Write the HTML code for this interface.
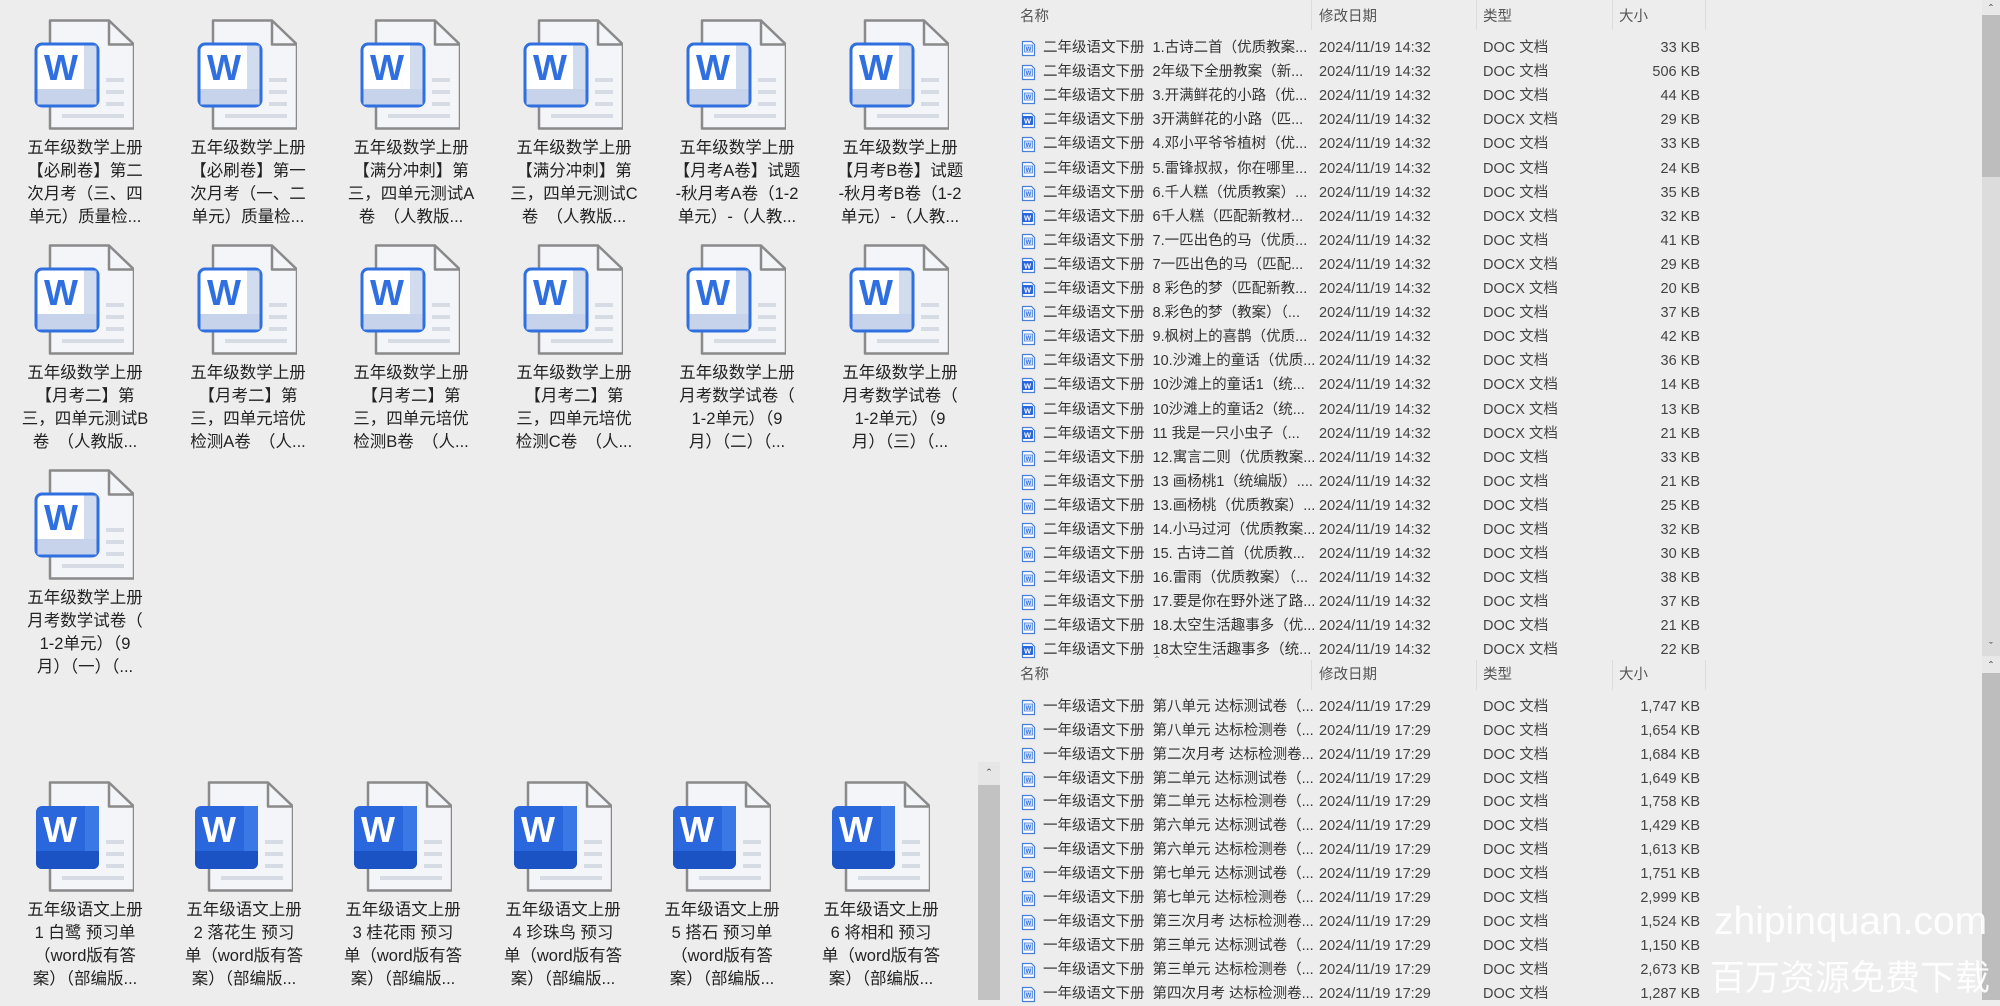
<!DOCTYPE html>
<html><head><meta charset="utf-8">
<style>
*{margin:0;padding:0;box-sizing:border-box}
html,body{width:2000px;height:1000px;overflow:hidden;background:#ededed;font-family:"Liberation Sans","Noto Sans CJK SC",sans-serif}
.ic{position:absolute;width:100px;height:112px}
.lb{position:absolute;width:130px;text-align:center;font-size:16.5px;line-height:23px;color:#222;white-space:nowrap}
.row{position:absolute;left:1020px;height:24px;width:700px;font-size:14.5px;line-height:24px;color:#333;white-space:nowrap}
.row svg{position:absolute;left:1px;top:4px;width:15px;height:17px}
.row .n{position:absolute;left:23px}
.row .d{position:absolute;left:299px;color:#444}
.row .t{position:absolute;left:463px;color:#444}
.row .s{position:absolute;right:20px;width:120px;text-align:right;color:#444}
.hd{position:absolute;left:1000px;width:705px;height:30px;font-size:14.5px;color:#555}
.hd span{position:absolute;top:5px}
.hd i{position:absolute;top:0;width:1px;height:30px;background:#dcdcdc}
.wm{position:absolute;color:rgba(255,255,255,.9);white-space:nowrap}
</style></head><body>
<svg width="0" height="0" style="position:absolute">
<defs>
<g id="wl">
<path d="M16 1.5h59l25 24v84H16z" fill="#f4f5f8" stroke="#8a8a8a" stroke-width="2.5" stroke-linejoin="round"/>
<path d="M75 1.5v24h25" fill="none" stroke="#8a8a8a" stroke-width="2.5" stroke-linejoin="round"/>
<rect x="72" y="59" width="18" height="4" fill="#d6dbe4"/><rect x="72" y="71" width="18" height="4" fill="#d6dbe4"/><rect x="72" y="83" width="18" height="4" fill="#d6dbe4"/><rect x="28" y="95" width="62" height="4" fill="#d6dbe4"/>
<rect x="2" y="25" width="62" height="62" rx="6" fill="#fff" stroke="#2f6fe0" stroke-width="3"/>
<rect x="3.5" y="70" width="59" height="15.5" fill="#c6d3ea"/>
<rect x="50" y="26.5" width="12.5" height="59" fill="#c6d3ea" opacity=".8"/>
<text x="27" y="61" text-anchor="middle" font-family="Liberation Sans,sans-serif" font-weight="bold" font-size="36" fill="#2f6fe0">W</text>
</g>
<g id="ws">
<path d="M16 1.5h59l25 24v84H16z" fill="#f4f5f8" stroke="#8a8a8a" stroke-width="2.5" stroke-linejoin="round"/>
<path d="M75 1.5v24h25" fill="none" stroke="#8a8a8a" stroke-width="2.5" stroke-linejoin="round"/>
<rect x="72" y="59" width="18" height="4" fill="#d6dbe4"/><rect x="72" y="71" width="18" height="4" fill="#d6dbe4"/><rect x="72" y="83" width="18" height="4" fill="#d6dbe4"/><rect x="28" y="95" width="62" height="4" fill="#d6dbe4"/>
<rect x="2" y="25" width="63" height="63" rx="6" fill="#2b67dc"/>
<path d="M2 70h63v12a6 6 0 0 1-6 6H8a6 6 0 0 1-6-6z" fill="#1b52c4"/>
<rect x="51" y="25" width="14" height="45" fill="#3a78e6"/>
<text x="26" y="61" text-anchor="middle" font-family="Liberation Sans,sans-serif" font-weight="bold" font-size="36" fill="#fff">W</text>
</g>
<g id="sd"><path d="M1.5 1.5h9l3 3v11h-12z" fill="#fff" stroke="#4a7fd8" stroke-width="1.2"/><rect x="3.5" y="5" width="8" height="7" fill="#dfe8f7" stroke="#4a7fd8" stroke-width=".8"/><text x="7.5" y="11" text-anchor="middle" font-size="6" font-weight="bold" fill="#2f6fe0" font-family="Liberation Sans,sans-serif">W</text></g>
<g id="sx"><path d="M1.5 1.5h9l3 3v11h-12z" fill="#fff" stroke="#4a7fd8" stroke-width="1.2"/><rect x="1" y="4" width="11" height="9" rx="1" fill="#2b67dc"/><text x="6.5" y="11.5" text-anchor="middle" font-size="7.5" font-weight="bold" fill="#fff" font-family="Liberation Sans,sans-serif">W</text></g>
</defs></svg>

<svg class="ic" style="left:34px;top:19px" viewBox="0 0 100 112"><use href="#wl"/></svg>
<svg class="ic" style="left:197px;top:19px" viewBox="0 0 100 112"><use href="#wl"/></svg>
<svg class="ic" style="left:360px;top:19px" viewBox="0 0 100 112"><use href="#wl"/></svg>
<svg class="ic" style="left:523px;top:19px" viewBox="0 0 100 112"><use href="#wl"/></svg>
<svg class="ic" style="left:686px;top:19px" viewBox="0 0 100 112"><use href="#wl"/></svg>
<svg class="ic" style="left:849px;top:19px" viewBox="0 0 100 112"><use href="#wl"/></svg>
<svg class="ic" style="left:34px;top:244px" viewBox="0 0 100 112"><use href="#wl"/></svg>
<svg class="ic" style="left:197px;top:244px" viewBox="0 0 100 112"><use href="#wl"/></svg>
<svg class="ic" style="left:360px;top:244px" viewBox="0 0 100 112"><use href="#wl"/></svg>
<svg class="ic" style="left:523px;top:244px" viewBox="0 0 100 112"><use href="#wl"/></svg>
<svg class="ic" style="left:686px;top:244px" viewBox="0 0 100 112"><use href="#wl"/></svg>
<svg class="ic" style="left:849px;top:244px" viewBox="0 0 100 112"><use href="#wl"/></svg>
<svg class="ic" style="left:34px;top:469px" viewBox="0 0 100 112"><use href="#wl"/></svg>

<div class="lb" style="left:20px;top:137px">五年级数学上册<br>【必刷卷】第二<br>次月考（三、四<br>单元）质量检...</div>
<div class="lb" style="left:183px;top:137px">五年级数学上册<br>【必刷卷】第一<br>次月考（一、二<br>单元）质量检...</div>
<div class="lb" style="left:346px;top:137px">五年级数学上册<br>【满分冲刺】第<br>三，四单元测试A<br>卷　（人教版...</div>
<div class="lb" style="left:509px;top:137px">五年级数学上册<br>【满分冲刺】第<br>三，四单元测试C<br>卷　（人教版...</div>
<div class="lb" style="left:672px;top:137px">五年级数学上册<br>【月考A卷】试题<br>-秋月考A卷（1-2<br>单元）-（人教...</div>
<div class="lb" style="left:835px;top:137px">五年级数学上册<br>【月考B卷】试题<br>-秋月考B卷（1-2<br>单元）-（人教...</div>
<div class="lb" style="left:20px;top:362px">五年级数学上册<br>【月考二】第<br>三，四单元测试B<br>卷　（人教版...</div>
<div class="lb" style="left:183px;top:362px">五年级数学上册<br>【月考二】第<br>三，四单元培优<br>检测A卷　（人...</div>
<div class="lb" style="left:346px;top:362px">五年级数学上册<br>【月考二】第<br>三，四单元培优<br>检测B卷　（人...</div>
<div class="lb" style="left:509px;top:362px">五年级数学上册<br>【月考二】第<br>三，四单元培优<br>检测C卷　（人...</div>
<div class="lb" style="left:672px;top:362px">五年级数学上册<br>月考数学试卷（<br>1-2单元）（9<br>月）（二）（...</div>
<div class="lb" style="left:835px;top:362px">五年级数学上册<br>月考数学试卷（<br>1-2单元）（9<br>月）（三）（...</div>
<div class="lb" style="left:20px;top:587px">五年级数学上册<br>月考数学试卷（<br>1-2单元）（9<br>月）（一）（...</div>

<svg class="ic" style="left:34px;top:781px" viewBox="0 0 100 112"><use href="#ws"/></svg>
<svg class="ic" style="left:193px;top:781px" viewBox="0 0 100 112"><use href="#ws"/></svg>
<svg class="ic" style="left:352px;top:781px" viewBox="0 0 100 112"><use href="#ws"/></svg>
<svg class="ic" style="left:512px;top:781px" viewBox="0 0 100 112"><use href="#ws"/></svg>
<svg class="ic" style="left:671px;top:781px" viewBox="0 0 100 112"><use href="#ws"/></svg>
<svg class="ic" style="left:830px;top:781px" viewBox="0 0 100 112"><use href="#ws"/></svg>
<div class="lb" style="left:20px;top:899px">五年级语文上册<br>1 白鹭 预习单<br>（word版有答<br>案）（部编版...</div>
<div class="lb" style="left:179px;top:899px">五年级语文上册<br>2 落花生 预习<br>单（word版有答<br>案）（部编版...</div>
<div class="lb" style="left:338px;top:899px">五年级语文上册<br>3 桂花雨 预习<br>单（word版有答<br>案）（部编版...</div>
<div class="lb" style="left:498px;top:899px">五年级语文上册<br>4 珍珠鸟 预习<br>单（word版有答<br>案）（部编版...</div>
<div class="lb" style="left:657px;top:899px">五年级语文上册<br>5 搭石 预习单<br>（word版有答<br>案）（部编版...</div>
<div class="lb" style="left:816px;top:899px">五年级语文上册<br>6 将相和 预习<br>单（word版有答<br>案）（部编版...</div>

<div style="position:absolute;left:978px;top:762px;width:22px;height:23px;background:#e6e6e6;color:#444;font-size:13px;text-align:center;line-height:23px">&#710;</div>
<div style="position:absolute;left:978px;top:785px;width:22px;height:215px;background:#c2c2c2"></div>

<div class="hd" style="top:0"><span style="left:20px">名称</span><span style="left:155px;top:-4px;font-size:12px;color:#777">&#710;</span><i style="left:311px"></i><span style="left:319px">修改日期</span><i style="left:476px"></i><span style="left:483px">类型</span><i style="left:612px"></i><span style="left:619px">大小</span><i style="left:705px"></i></div>

<div class="row" style="top:36px"><svg viewBox="0 0 15 17"><use href="#sd"/></svg><span class="n">二年级语文下册&nbsp; 1.古诗二首（优质教案...</span><span class="d">2024/11/19 14:32</span><span class="t">DOC 文档</span><span class="s">33 KB</span></div>
<div class="row" style="top:60px"><svg viewBox="0 0 15 17"><use href="#sd"/></svg><span class="n">二年级语文下册&nbsp; 2年级下全册教案（新...</span><span class="d">2024/11/19 14:32</span><span class="t">DOC 文档</span><span class="s">506 KB</span></div>
<div class="row" style="top:84px"><svg viewBox="0 0 15 17"><use href="#sd"/></svg><span class="n">二年级语文下册&nbsp; 3.开满鲜花的小路（优...</span><span class="d">2024/11/19 14:32</span><span class="t">DOC 文档</span><span class="s">44 KB</span></div>
<div class="row" style="top:108px"><svg viewBox="0 0 15 17"><use href="#sx"/></svg><span class="n">二年级语文下册&nbsp; 3开满鲜花的小路（匹...</span><span class="d">2024/11/19 14:32</span><span class="t">DOCX 文档</span><span class="s">29 KB</span></div>
<div class="row" style="top:132px"><svg viewBox="0 0 15 17"><use href="#sd"/></svg><span class="n">二年级语文下册&nbsp; 4.邓小平爷爷植树（优...</span><span class="d">2024/11/19 14:32</span><span class="t">DOC 文档</span><span class="s">33 KB</span></div>
<div class="row" style="top:157px"><svg viewBox="0 0 15 17"><use href="#sd"/></svg><span class="n">二年级语文下册&nbsp; 5.雷锋叔叔，你在哪里...</span><span class="d">2024/11/19 14:32</span><span class="t">DOC 文档</span><span class="s">24 KB</span></div>
<div class="row" style="top:181px"><svg viewBox="0 0 15 17"><use href="#sd"/></svg><span class="n">二年级语文下册&nbsp; 6.千人糕（优质教案）...</span><span class="d">2024/11/19 14:32</span><span class="t">DOC 文档</span><span class="s">35 KB</span></div>
<div class="row" style="top:205px"><svg viewBox="0 0 15 17"><use href="#sx"/></svg><span class="n">二年级语文下册&nbsp; 6千人糕（匹配新教材...</span><span class="d">2024/11/19 14:32</span><span class="t">DOCX 文档</span><span class="s">32 KB</span></div>
<div class="row" style="top:229px"><svg viewBox="0 0 15 17"><use href="#sd"/></svg><span class="n">二年级语文下册&nbsp; 7.一匹出色的马（优质...</span><span class="d">2024/11/19 14:32</span><span class="t">DOC 文档</span><span class="s">41 KB</span></div>
<div class="row" style="top:253px"><svg viewBox="0 0 15 17"><use href="#sx"/></svg><span class="n">二年级语文下册&nbsp; 7一匹出色的马（匹配...</span><span class="d">2024/11/19 14:32</span><span class="t">DOCX 文档</span><span class="s">29 KB</span></div>
<div class="row" style="top:277px"><svg viewBox="0 0 15 17"><use href="#sx"/></svg><span class="n">二年级语文下册&nbsp; 8 彩色的梦（匹配新教...</span><span class="d">2024/11/19 14:32</span><span class="t">DOCX 文档</span><span class="s">20 KB</span></div>
<div class="row" style="top:301px"><svg viewBox="0 0 15 17"><use href="#sd"/></svg><span class="n">二年级语文下册&nbsp; 8.彩色的梦（教案）（...</span><span class="d">2024/11/19 14:32</span><span class="t">DOC 文档</span><span class="s">37 KB</span></div>
<div class="row" style="top:325px"><svg viewBox="0 0 15 17"><use href="#sd"/></svg><span class="n">二年级语文下册&nbsp; 9.枫树上的喜鹊（优质...</span><span class="d">2024/11/19 14:32</span><span class="t">DOC 文档</span><span class="s">42 KB</span></div>
<div class="row" style="top:349px"><svg viewBox="0 0 15 17"><use href="#sd"/></svg><span class="n">二年级语文下册&nbsp; 10.沙滩上的童话（优质...</span><span class="d">2024/11/19 14:32</span><span class="t">DOC 文档</span><span class="s">36 KB</span></div>
<div class="row" style="top:373px"><svg viewBox="0 0 15 17"><use href="#sx"/></svg><span class="n">二年级语文下册&nbsp; 10沙滩上的童话1（统...</span><span class="d">2024/11/19 14:32</span><span class="t">DOCX 文档</span><span class="s">14 KB</span></div>
<div class="row" style="top:398px"><svg viewBox="0 0 15 17"><use href="#sx"/></svg><span class="n">二年级语文下册&nbsp; 10沙滩上的童话2（统...</span><span class="d">2024/11/19 14:32</span><span class="t">DOCX 文档</span><span class="s">13 KB</span></div>
<div class="row" style="top:422px"><svg viewBox="0 0 15 17"><use href="#sx"/></svg><span class="n">二年级语文下册&nbsp; 11 我是一只小虫子（...</span><span class="d">2024/11/19 14:32</span><span class="t">DOCX 文档</span><span class="s">21 KB</span></div>
<div class="row" style="top:446px"><svg viewBox="0 0 15 17"><use href="#sd"/></svg><span class="n">二年级语文下册&nbsp; 12.寓言二则（优质教案...</span><span class="d">2024/11/19 14:32</span><span class="t">DOC 文档</span><span class="s">33 KB</span></div>
<div class="row" style="top:470px"><svg viewBox="0 0 15 17"><use href="#sd"/></svg><span class="n">二年级语文下册&nbsp; 13 画杨桃1（统编版）....</span><span class="d">2024/11/19 14:32</span><span class="t">DOC 文档</span><span class="s">21 KB</span></div>
<div class="row" style="top:494px"><svg viewBox="0 0 15 17"><use href="#sd"/></svg><span class="n">二年级语文下册&nbsp; 13.画杨桃（优质教案）...</span><span class="d">2024/11/19 14:32</span><span class="t">DOC 文档</span><span class="s">25 KB</span></div>
<div class="row" style="top:518px"><svg viewBox="0 0 15 17"><use href="#sd"/></svg><span class="n">二年级语文下册&nbsp; 14.小马过河（优质教案...</span><span class="d">2024/11/19 14:32</span><span class="t">DOC 文档</span><span class="s">32 KB</span></div>
<div class="row" style="top:542px"><svg viewBox="0 0 15 17"><use href="#sd"/></svg><span class="n">二年级语文下册&nbsp; 15. 古诗二首（优质教...</span><span class="d">2024/11/19 14:32</span><span class="t">DOC 文档</span><span class="s">30 KB</span></div>
<div class="row" style="top:566px"><svg viewBox="0 0 15 17"><use href="#sd"/></svg><span class="n">二年级语文下册&nbsp; 16.雷雨（优质教案）（...</span><span class="d">2024/11/19 14:32</span><span class="t">DOC 文档</span><span class="s">38 KB</span></div>
<div class="row" style="top:590px"><svg viewBox="0 0 15 17"><use href="#sd"/></svg><span class="n">二年级语文下册&nbsp; 17.要是你在野外迷了路...</span><span class="d">2024/11/19 14:32</span><span class="t">DOC 文档</span><span class="s">37 KB</span></div>
<div class="row" style="top:614px"><svg viewBox="0 0 15 17"><use href="#sd"/></svg><span class="n">二年级语文下册&nbsp; 18.太空生活趣事多（优...</span><span class="d">2024/11/19 14:32</span><span class="t">DOC 文档</span><span class="s">21 KB</span></div>
<div class="row" style="top:638px"><svg viewBox="0 0 15 17"><use href="#sx"/></svg><span class="n">二年级语文下册&nbsp; 18太空生活趣事多（统...</span><span class="d">2024/11/19 14:32</span><span class="t">DOCX 文档</span><span class="s">22 KB</span></div>

<div class="hd" style="top:660px"><span style="left:20px;top:3px">名称</span><span style="left:155px;top:-6px;font-size:12px;color:#777">&#710;</span><i style="left:311px"></i><span style="left:319px;top:3px">修改日期</span><i style="left:476px"></i><span style="left:483px;top:3px">类型</span><i style="left:612px"></i><span style="left:619px;top:3px">大小</span><i style="left:705px"></i></div>

<div class="row" style="top:695px"><svg viewBox="0 0 15 17"><use href="#sd"/></svg><span class="n">一年级语文下册&nbsp; 第八单元 达标测试卷（...</span><span class="d">2024/11/19 17:29</span><span class="t">DOC 文档</span><span class="s">1,747 KB</span></div>
<div class="row" style="top:719px"><svg viewBox="0 0 15 17"><use href="#sd"/></svg><span class="n">一年级语文下册&nbsp; 第八单元 达标检测卷（...</span><span class="d">2024/11/19 17:29</span><span class="t">DOC 文档</span><span class="s">1,654 KB</span></div>
<div class="row" style="top:743px"><svg viewBox="0 0 15 17"><use href="#sd"/></svg><span class="n">一年级语文下册&nbsp; 第二次月考 达标检测卷...</span><span class="d">2024/11/19 17:29</span><span class="t">DOC 文档</span><span class="s">1,684 KB</span></div>
<div class="row" style="top:767px"><svg viewBox="0 0 15 17"><use href="#sd"/></svg><span class="n">一年级语文下册&nbsp; 第二单元 达标测试卷（...</span><span class="d">2024/11/19 17:29</span><span class="t">DOC 文档</span><span class="s">1,649 KB</span></div>
<div class="row" style="top:790px"><svg viewBox="0 0 15 17"><use href="#sd"/></svg><span class="n">一年级语文下册&nbsp; 第二单元 达标检测卷（...</span><span class="d">2024/11/19 17:29</span><span class="t">DOC 文档</span><span class="s">1,758 KB</span></div>
<div class="row" style="top:814px"><svg viewBox="0 0 15 17"><use href="#sd"/></svg><span class="n">一年级语文下册&nbsp; 第六单元 达标测试卷（...</span><span class="d">2024/11/19 17:29</span><span class="t">DOC 文档</span><span class="s">1,429 KB</span></div>
<div class="row" style="top:838px"><svg viewBox="0 0 15 17"><use href="#sd"/></svg><span class="n">一年级语文下册&nbsp; 第六单元 达标检测卷（...</span><span class="d">2024/11/19 17:29</span><span class="t">DOC 文档</span><span class="s">1,613 KB</span></div>
<div class="row" style="top:862px"><svg viewBox="0 0 15 17"><use href="#sd"/></svg><span class="n">一年级语文下册&nbsp; 第七单元 达标测试卷（...</span><span class="d">2024/11/19 17:29</span><span class="t">DOC 文档</span><span class="s">1,751 KB</span></div>
<div class="row" style="top:886px"><svg viewBox="0 0 15 17"><use href="#sd"/></svg><span class="n">一年级语文下册&nbsp; 第七单元 达标检测卷（...</span><span class="d">2024/11/19 17:29</span><span class="t">DOC 文档</span><span class="s">2,999 KB</span></div>
<div class="row" style="top:910px"><svg viewBox="0 0 15 17"><use href="#sd"/></svg><span class="n">一年级语文下册&nbsp; 第三次月考 达标检测卷...</span><span class="d">2024/11/19 17:29</span><span class="t">DOC 文档</span><span class="s">1,524 KB</span></div>
<div class="row" style="top:934px"><svg viewBox="0 0 15 17"><use href="#sd"/></svg><span class="n">一年级语文下册&nbsp; 第三单元 达标测试卷（...</span><span class="d">2024/11/19 17:29</span><span class="t">DOC 文档</span><span class="s">1,150 KB</span></div>
<div class="row" style="top:958px"><svg viewBox="0 0 15 17"><use href="#sd"/></svg><span class="n">一年级语文下册&nbsp; 第三单元 达标检测卷（...</span><span class="d">2024/11/19 17:29</span><span class="t">DOC 文档</span><span class="s">2,673 KB</span></div>
<div class="row" style="top:982px"><svg viewBox="0 0 15 17"><use href="#sd"/></svg><span class="n">一年级语文下册&nbsp; 第四次月考 达标检测卷...</span><span class="d">2024/11/19 17:29</span><span class="t">DOC 文档</span><span class="s">1,287 KB</span></div>

<div style="position:absolute;left:1982px;top:0;width:18px;height:1000px;background:#dcdcdc"></div>
<div style="position:absolute;left:1982px;top:0;width:18px;height:15px;background:#e8e8e8;color:#444;font-size:12px;text-align:center;line-height:18px">&#710;</div>
<div style="position:absolute;left:1982px;top:15px;width:18px;height:162px;background:#bdbdbd"></div>
<div style="position:absolute;left:1982px;top:638px;width:18px;height:18px;color:#444;font-size:11px;text-align:center;line-height:18px">&#711;</div>
<div style="position:absolute;left:1982px;top:656px;width:18px;height:17px;background:#e8e8e8;color:#444;font-size:12px;text-align:center;line-height:20px">&#710;</div>
<div style="position:absolute;left:1982px;top:673px;width:18px;height:327px;background:#bdbdbd"></div>

<div class="wm" style="left:1714px;top:900px;font-size:39px;font-family:'Liberation Sans',sans-serif">zhipinquan.com</div>
<div class="wm" style="left:1710px;top:950px;font-size:35px">百万资源免费下载</div>
</body></html>
